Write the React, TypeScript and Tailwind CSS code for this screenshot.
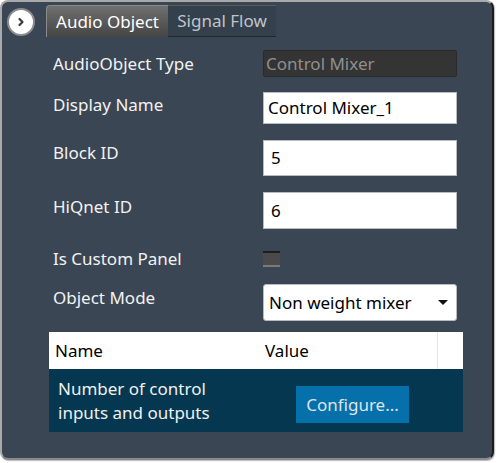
import React from "react";

function Field({
  label,
  children,
  className,
  labelClass = "",
}: {
  label: string;
  children: React.ReactNode;
  className: string;
  labelClass?: string;
}) {
  return (
    <div className={`flex items-center ${className}`}>
      <span className={`w-[210px] shrink-0 ${labelClass}`}>{label}</span>
      {children}
    </div>
  );
}

export default function App() {
  return (
    <div
      className="w-[497px] h-[463px] bg-white text-[17px]"
      style={{ fontFamily: '"Noto Sans", "Open Sans", sans-serif' }}
    >
      <div className="relative w-[494px] h-[460px] bg-[#3a4654] rounded-[8px] border-t-2 border-l-2 border-[#a9a9a9] border-r-2 border-r-[#1c1c1c] border-b-2 border-b-[#8a8a8a] shadow-[1px_1px_1px_#b8b8b8] text-[#f2f2f2]">
        {/* header */}
        <div className="flex items-center pt-[3px] pl-[5px]">
          <button className="w-[28px] h-[28px] mt-[1px] rounded-full bg-white border-2 border-[#8c8c8c] flex items-center justify-center">
            <svg width="12" height="12" viewBox="0 0 12 12">
              <path d="M4.5 3 L7.5 6 L4.5 9" stroke="#3a3a3a" strokeWidth="2.2" fill="none" strokeLinecap="round" strokeLinejoin="round" />
            </svg>
          </button>
          <div className="ml-[11px] flex h-[32px]">
            <div className="w-[122px] flex items-center justify-center rounded-tl-[4px] border-t border-l border-[#8a8a8a] bg-gradient-to-b from-[#707070] to-[#454545] text-white text-[17px]">
              Audio Object
            </div>
            <div className="w-[108px] flex items-center justify-center border-t border-[#5a5a5a] border-b border-b-[#1e2830] bg-[#34404c] text-[#c0c4c9] text-[17px]">
              Signal Flow
            </div>
          </div>
        </div>

        {/* form */}
        <div className="pl-[51px] flex flex-col">
          <Field label="AudioObject Type" className="mt-[13px] h-[27px]">
            <div className="w-[194px] h-[27px] bg-[#343434] border border-[#2a2a2a] rounded-[2px] text-[#8f8f8f] px-[2px] flex items-center leading-none">
              Control Mixer
            </div>
          </Field>
          <Field label="Display Name" className="mt-[15px] h-[32px]" labelClass="mb-[6px]">
            <div className="w-[194px] h-[32px] bg-white border border-[#b8bcc2] text-black px-[4px] flex items-center">
              Control Mixer_1
            </div>
          </Field>
          <Field label="Block ID" className="mt-[16px] h-[36px]" labelClass="mb-[10px]">
            <div className="w-[194px] h-[36px] bg-white border border-[#b8bcc2] text-black px-[7px] flex items-center">
              5
            </div>
          </Field>
          <Field label="HiQnet ID" className="mt-[16px] h-[37px]" labelClass="mb-[7px]">
            <div className="w-[194px] h-[37px] bg-white border border-[#b8bcc2] text-black px-[7px] flex items-center">
              6
            </div>
          </Field>
          <Field label="Is Custom Panel" className="mt-[21px] h-[17px]">
            <div className="w-[17px] h-[16px] bg-[#4a4a4a] border-t-2 border-[#1e1e1e] border-b-2 border-b-[#7a7a7a]" />
          </Field>
          <Field label="Object Mode" className="mt-[17px] h-[37px]" labelClass="mb-[10px]">
            <div className="w-[194px] h-[37px] bg-white border border-[#b8bcc2] rounded-[3px] text-black pl-[5px] pr-[8px] flex items-center justify-between">
              <span>Non weight mixer</span>
              <svg width="10" height="6" viewBox="0 0 10 6">
                <path d="M0 0 L10 0 L5 5 Z" fill="#111" />
              </svg>
            </div>
          </Field>
        </div>

        {/* table */}
        <div className="ml-[47px] mt-[11px] w-[414px]">
          <div className="flex h-[37px] bg-white text-black items-center">
            <span className="w-[216px] pl-[6px]">Name</span>
            <span className="flex-1">Value</span>
            <span className="w-[26px] h-full border-l border-[#e6e6e6]" />
          </div>
          <div className="flex h-[63px] bg-[#053850] items-center">
            <div className="w-[240px] pl-[9px] leading-[24px] text-[#f0f0f0]">
              Number of control
              <br />
              inputs and outputs
            </div>
            <button className="w-[113px] h-[37px] mt-[8px] bg-[#0670aa] text-[#dde4ea] ml-[7px]">Configure...</button>
          </div>
        </div>
      </div>
    </div>
  );
}
